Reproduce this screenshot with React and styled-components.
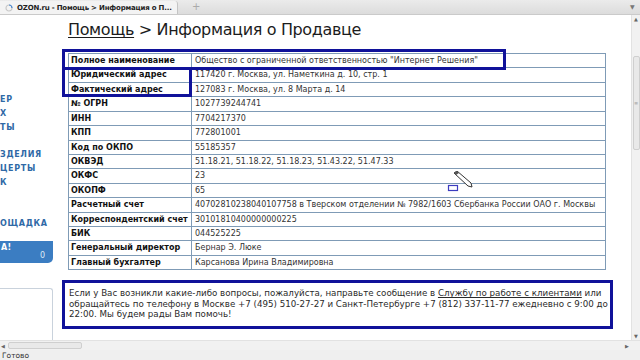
import React from 'react';
import styled, { createGlobalStyle } from 'styled-components';

const GlobalStyle = createGlobalStyle`
  html, body {
    margin: 0;
    padding: 0;
  }
  body {
    width: 640px;
    height: 360px;
    overflow: hidden;
    background: #fff;
    font-family: "DejaVu Sans", Verdana, sans-serif;
  }
`;

const Window = styled.div`
  width: 640px;
  height: 360px;
  display: flex;
  flex-direction: column;
  overflow: hidden;
`;

const TabStrip = styled.div`
  height: 14px;
  flex: none;
  display: flex;
  align-items: flex-end;
  background: linear-gradient(#ebebeb, #dcdcdc);
  border-bottom: 1px solid #cacaca;
`;

const Tab = styled.div`
  width: 172px;
  height: 13px;
  display: flex;
  align-items: center;
  gap: 4px;
  padding-left: 5px;
  background: #f3f3f3;
  border-right: 1px solid #c4c4c4;
  border-top-right-radius: 3px;
  font-size: 7px;
  font-weight: bold;
  color: #222;
  white-space: nowrap;
  overflow: hidden;
  letter-spacing: -0.2px;
`;

const NewTab = styled.div`
  margin-left: 14px;
  height: 13px;
  line-height: 12px;
  font-size: 10px;
  color: #aaa;
`;

const StripEnd = styled.div`
  margin-left: auto;
  width: 10px;
  height: 13px;
  font-size: 6px;
  line-height: 12px;
  color: #777;
`;

const Viewport = styled.div`
  flex: 1;
  display: flex;
  position: relative;
  overflow: hidden;
`;

const Sidebar = styled.div`
  width: 54px;
  flex: none;
  display: flex;
  flex-direction: column;
  padding-top: 78px;
  box-sizing: border-box;
`;

const NavGroup = styled.div`
  margin-top: ${({ $gap }) => $gap || 0}px;
`;

const NavItem = styled.div`
  height: 14px;
  line-height: 14px;
  font-size: 8px;
  font-weight: bold;
  color: #2f69a6;
  letter-spacing: 0.7px;
  white-space: nowrap;
`;

const PromoBox = styled.div`
  margin-top: 10px;
  height: 22px;
  width: 53px;
  background: #3b7dc2;
  border-bottom-right-radius: 5px;
  color: #fff;
  font-size: 8px;
  font-weight: bold;
`;

const PromoTitle = styled.div`
  padding: 2px 0 0 1px;
  letter-spacing: 0.4px;
`;

const PromoCount = styled.div`
  text-align: right;
  padding-right: 8px;
  font-weight: normal;
  color: #dfe9f5;
  line-height: 8px;
`;

const SidePanel = styled.div`
  margin-top: 25px;
  flex: 1;
  width: 53px;
  border-top: 1px solid #c9d2dc;
  border-right: 1px solid #c9d2dc;
  border-top-right-radius: 3px;
  box-sizing: border-box;
`;

const Main = styled.div`
  flex: 1;
  padding: 5px 0 0 14px;
  min-width: 0;
`;

const Title = styled.h1`
  margin: 0;
  font-size: 16px;
  line-height: 20px;
  font-weight: normal;
  color: #1c1c1c;
  white-space: nowrap;
  letter-spacing: -0.35px;
`;

const Crumb = styled.span`
  text-decoration: underline;
  text-decoration-thickness: 1px;
  text-underline-offset: 2px;
`;

const InfoGrid = styled.div`
  margin-top: 13px;
  width: 538px;
  display: grid;
  grid-template-columns: 123px 1fr;
  grid-auto-rows: 14.43px;
  border-top: 1px solid #7f9bb6;
  border-left: 1px solid #7f9bb6;
  box-sizing: border-box;
`;

const Cell = styled.div`
  border-right: 1px solid #7f9bb6;
  border-bottom: 1px solid #7f9bb6;
  padding-left: ${({ $label }) => ($label ? 2 : 3)}px;
  font-size: 8px;
  line-height: 13.4px;
  font-weight: ${({ $label }) => ($label ? 'bold' : 'normal')};
  color: ${({ $label }) => ($label ? '#111' : '#333')};
  white-space: nowrap;
  overflow: hidden;
`;

const Note = styled.p`
  margin: 18px 0 0 1px;
  font-size: 8.7px;
  line-height: 10.5px;
  color: #2a2a2a;
  white-space: nowrap;
`;

const NoteLink = styled.span`
  text-decoration: underline;
`;

const VScroll = styled.div`
  width: 9px;
  flex: none;
  background: #f1f1f1;
  border-left: 1px solid #e2e2e2;
  display: flex;
  flex-direction: column;
  align-items: center;
  box-sizing: border-box;
`;

const Arrow = styled.div`
  font-size: 5px;
  line-height: 8px;
  height: 8px;
  color: #666;
`;

const VThumb = styled.div`
  margin-top: 33px;
  width: 7px;
  height: 94px;
  background: #e9e9e9;
  border: 1px solid #cfcfcf;
  border-radius: 2px;
  box-sizing: border-box;
  display: flex;
  align-items: center;
  justify-content: center;
  font-size: 5px;
  color: #999;
`;

const VTrackEnd = styled.div`
  margin-top: auto;
`;

const HScroll = styled.div`
  height: 10px;
  flex: none;
  display: flex;
  align-items: center;
  background: #f1f1f1;
  border-top: 1px solid #e2e2e2;
  box-sizing: border-box;
`;

const HThumb = styled.div`
  margin-left: 2px;
  width: 74px;
  height: 7px;
  background: #e9e9e9;
  border: 1px solid #cfcfcf;
  border-radius: 2px;
  box-sizing: border-box;
`;

const HArrow = styled.div`
  width: 6px;
  font-size: 5px;
  color: #666;
  text-align: center;
  margin-left: ${({ $end }) => ($end ? 'auto' : '0')};
  margin-right: ${({ $end }) => ($end ? '10px' : '0')};
`;

const StatusBar = styled.div`
  height: 10px;
  flex: none;
  background: #efefef;
  font-size: 7.5px;
  line-height: 11px;
  padding-left: 2px;
  color: #333;
  overflow: hidden;
`;

const Highlight = styled.div`
  position: absolute;
  border: 3px solid #10129a;
  box-sizing: border-box;
  pointer-events: none;
`;

const CursorMark = styled.svg`
  position: absolute;
  left: 447px;
  top: 156px;
`;

const rows = [
  ['Полное наименование', 'Общество с ограниченной ответственностью "Интернет Решения"'],
  ['Юридический адрес', '117420 г. Москва, ул. Наметкина д. 10, стр. 1'],
  ['Фактический адрес', '127083 г. Москва, ул. 8 Марта д. 14'],
  ['№ ОГРН', '1027739244741'],
  ['ИНН', '7704217370'],
  ['КПП', '772801001'],
  ['Код по ОКПО', '55185357'],
  ['ОКВЭД', '51.18.21, 51.18.22, 51.18.23, 51.43.22, 51.47.33'],
  ['ОКФС', '23'],
  ['ОКОПФ', '65'],
  ['Расчетный счет', '40702810238040107758 в Тверском отделении № 7982/1603 Сбербанка России ОАО г. Москвы'],
  ['Корреспондентский счет', '30101810400000000225'],
  ['БИК', '044525225'],
  ['Генеральный директор', 'Бернар Э. Люке'],
  ['Главный бухгалтер', 'Карсанова Ирина Владимировна'],
];

const marks = [
  { left: 62, top: 34, width: 444, height: 21 },
  { left: 62, top: 52, width: 130, height: 30 },
  { left: 62, top: 265, width: 551, height: 49 },
];

const App = () => (
  <Window>
    <GlobalStyle />
    <TabStrip>
      <Tab>
        <svg width="8" height="8" viewBox="0 0 8 8">
          <circle cx="4" cy="4" r="3" fill="none" stroke="#c8c8c8" strokeWidth="1.2" />
          <path d="M4 1 A3 3 0 0 1 7 4" fill="none" stroke="#4a88d0" strokeWidth="1.2" />
        </svg>
        OZON.ru - Помощь &gt; Информация о П...
      </Tab>
      <NewTab>+</NewTab>
      <StripEnd>▼</StripEnd>
    </TabStrip>

    <Viewport>
      <Sidebar>
        <NavGroup>
          <NavItem>ЕР</NavItem>
          <NavItem>Х</NavItem>
          <NavItem>ТЫ</NavItem>
        </NavGroup>
        <NavGroup $gap={13}>
          <NavItem>ЗДЕЛИЯ</NavItem>
          <NavItem>ЦЕРТЫ</NavItem>
          <NavItem>К</NavItem>
        </NavGroup>
        <NavGroup $gap={27}>
          <NavItem>ОЩАДКА</NavItem>
        </NavGroup>
        <PromoBox>
          <PromoTitle>А!</PromoTitle>
          <PromoCount>0</PromoCount>
        </PromoBox>
        <SidePanel />
      </Sidebar>

      <Main>
        <Title>
          <Crumb>Помощь</Crumb> &gt; Информация о Продавце
        </Title>
        <InfoGrid>
          {rows.map(([label, value]) => (
            <React.Fragment key={label}>
              <Cell $label>{label}</Cell>
              <Cell>{value}</Cell>
            </React.Fragment>
          ))}
        </InfoGrid>
        <Note>
          Если у Вас возникли какие-либо вопросы, пожалуйста, направьте сообщение в{' '}
          <NoteLink>Службу по работе с клиентами</NoteLink> или
          <br />
          обращайтесь по телефону в Москве +7 (495) 510-27-27 и Санкт-Петербурге +7 (812) 337-11-77 ежедневно с 9:00 до
          <br />
          22:00. Мы будем рады Вам помочь!
        </Note>
      </Main>

      <VScroll>
        <Arrow>▲</Arrow>
        <VThumb>≡</VThumb>
        <VTrackEnd>
          <Arrow>▼</Arrow>
        </VTrackEnd>
      </VScroll>

      {marks.map((m, i) => (
        <Highlight key={i} style={m} />
      ))}

      <CursorMark width="26" height="24" viewBox="0 0 26 24">
        <path d="M7 2 L10 0 L24 12 L25 16 L21 15 Z" fill="#fff" stroke="#333" strokeWidth="1" />
        <path d="M7 2 L10 0 L12 2 L9 4 Z" fill="#555" />
        <rect x="1.5" y="14.5" width="9" height="5" fill="none" stroke="#3c3cc0" strokeWidth="1.2" />
      </CursorMark>
    </Viewport>

    <HScroll>
      <HArrow>◀</HArrow>
      <HThumb />
      <HArrow $end>▶</HArrow>
    </HScroll>
    <StatusBar>Готово</StatusBar>
  </Window>
);

export default App;
